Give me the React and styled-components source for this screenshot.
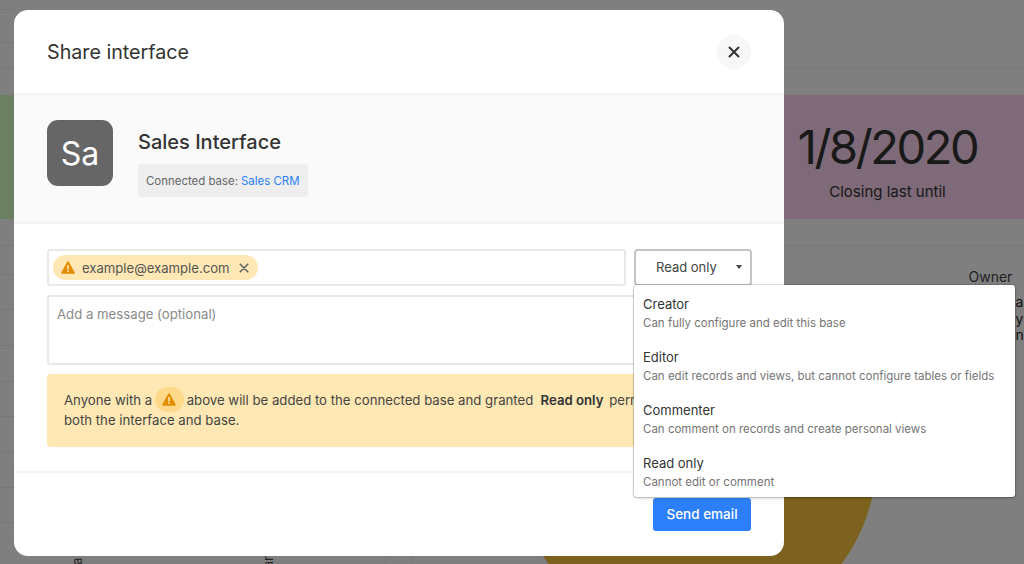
import React from 'react'
import styled, { createGlobalStyle } from 'styled-components'

const GlobalStyle = createGlobalStyle`
  html, body {
    margin: 0;
    padding: 0;
    background: #fff;
    font-family: Inter, "Liberation Sans", sans-serif;
  }
  * {
    box-sizing: border-box;
  }
`

const Page = styled.div`
  position: relative;
  width: 1024px;
  height: 564px;
  overflow: hidden;
  background: #fff;
  color: #333;
`

/* the dashboard behind the dialog */
const TopBar = styled.div`
  height: 95px;
`
const TopLine = styled.div`
  height: ${(p) => p.$h}px;
  width: ${(p) => (p.$short ? '14px' : '100%')};
  border-bottom: 1px solid #eee;
`
const Banners = styled.div`
  display: flex;
  height: 124px;
`
const Banner = styled.div`
  width: ${(p) => p.$w}px;
  background: ${(p) => p.$bg};
  display: flex;
  flex-direction: column;
  align-items: center;
`
const BigNumber = styled.div`
  margin-top: 23px;
  font-size: 47px;
  line-height: 58px;
  letter-spacing: -2.4px;
  color: #333;
`
const BannerLabel = styled.div`
  margin-top: 7px;
  font-size: 15px;
  line-height: 18px;
  color: #333;
`
const Spacer = styled.div`
  height: 27px;
  border-bottom: 1px solid #eee;
`
const Lower = styled.div`
  display: flex;
  height: 318px;
`
const TablePanel = styled.div`
  width: 385.5px;
  border-right: 1px solid #eee;
`
const TableRow = styled.div`
  height: ${(p) => p.$h}px;
  border-bottom: 1px solid #eee;
`
const AxisLabels = styled.div`
  display: flex;
  padding: 33px 0 0 70px;
  gap: 177px;
`
const AxisLabel = styled.div`
  writing-mode: vertical-rl;
  transform: rotate(180deg);
  font-size: 13px;
  line-height: 14px;
  color: #444;
`
const ChartPanel = styled.div`
  display: flex;
  flex: 1;
  margin-left: 26px;
  border-left: 1px solid #eee;
  padding: 28px 0 0 100px;
  min-width: 0;
`
const Pie = styled.div`
  flex-shrink: 0;
  width: 364px;
  height: 364px;
  border-radius: 50%;
  background: #fac23c;
`
const Legend = styled.div`
  margin-left: 92px;
  margin-top: -6px;
  font-size: 14px;
  white-space: nowrap;
`
const LegendTitle = styled.div`
  line-height: 17px;
  color: #444;
`
const LegendItems = styled.div`
  margin-top: 9px;
  padding-left: 47px;
  line-height: 16.5px;
  color: #222;
`
const Dim = styled.div`
  position: absolute;
  inset: 0;
  background: rgba(0, 0, 0, 0.5);
`

/* dialog */
const Modal = styled.div`
  position: absolute;
  left: 13.5px;
  top: 10px;
  width: 770.5px;
  height: 546px;
  background: #fff;
  border-radius: 14px;
  display: flex;
  flex-direction: column;
`
const Header = styled.div`
  height: 85px;
  flex-shrink: 0;
  display: flex;
  align-items: center;
  justify-content: space-between;
  padding: 0 33px 0 33.5px;
  border-bottom: 2px solid #f3f3f3;
`
const Title = styled.h1`
  margin: 0;
  font-size: 19.7px;
  font-weight: 400;
  color: #333;
`
const CloseButton = styled.button`
  width: 34px;
  height: 34px;
  border: none;
  border-radius: 50%;
  background: #f7f7f7;
  padding: 0;
  display: flex;
  align-items: center;
  justify-content: center;
`
const InfoBand = styled.div`
  height: 129px;
  flex-shrink: 0;
  display: flex;
  gap: 25px;
  padding: 25px 33.5px 0;
  background: #fafafa;
  border-bottom: 2px solid #f3f3f3;
`
const Avatar = styled.div`
  width: 66px;
  height: 66px;
  border-radius: 11px;
  background: #666;
  color: #fff;
  font-size: 32px;
  display: flex;
  align-items: center;
  justify-content: center;
`
const InfoText = styled.div`
  display: flex;
  flex-direction: column;
  align-items: flex-start;
`
const InfoName = styled.div`
  margin-top: 9px;
  font-size: 20px;
  line-height: 27px;
  font-weight: 500;
  color: #333;
`
const BaseChip = styled.div`
  margin-top: 8px;
  height: 33px;
  padding: 0 8px;
  display: flex;
  align-items: center;
  gap: 3px;
  background: #eee;
  border-radius: 3px;
  font-size: 11.45px;
  color: #666;
`
const BaseLink = styled.span`
  color: #2d7ff9;
`
const Form = styled.div`
  flex: 1;
  padding: 25px 32px 0 33.5px;
  display: flex;
  flex-direction: column;
  border-bottom: 2px solid #f3f3f3;
`
const RecipientRow = styled.div`
  display: flex;
  gap: 8px;
`
const RecipientInput = styled.div`
  flex: 1;
  height: 37px;
  border: 2px solid #e8e8e8;
  border-radius: 3px;
  padding: 4px;
  display: flex;
  align-items: center;
`
const Pill = styled.div`
  height: 25px;
  width: 205px;
  border-radius: 13px;
  background: #ffe8b3;
  padding: 0 9px 0 8px;
  display: flex;
  align-items: center;
  font-size: 13.1px;
  color: #555;
`
const PillEmail = styled.span`
  margin-left: 7px;
  flex: 1;
`
const SelectWrap = styled.div`
  position: relative;
  width: 118px;
`
const SelectBox = styled.div`
  height: 37px;
  border: 2px solid #c4c4c4;
  border-radius: 4px;
  display: flex;
  align-items: center;
  padding: 0 8px 2px 20px;
  justify-content: space-between;
  font-size: 13px;
  color: #444;
`
const Caret = styled.span`
  width: 0;
  height: 0;
  border-left: 3.5px solid transparent;
  border-right: 3.5px solid transparent;
  border-top: 4.5px solid #444;
`
const Popover = styled.div`
  position: absolute;
  top: 36px;
  left: 0;
  width: 381px;
  height: 212px;
  background: #fff;
  border-radius: 3px;
  box-shadow: 0 0 0 1px rgba(0, 0, 0, 0.1), 0 1px 3px rgba(0, 0, 0, 0.25);
  padding: 9px 9px 0;
  z-index: 2;
`
const Option = styled.div`
  height: 53px;
`
const OptionName = styled.div`
  font-size: 13px;
  line-height: 20px;
  color: #333;
`
const OptionHint = styled.div`
  font-size: 11.5px;
  line-height: 18px;
  color: #757575;
  white-space: nowrap;
`
const MessageBox = styled.div`
  margin-top: 9px;
  height: 70px;
  border: 2px solid #e8e8e8;
  border-radius: 3px;
  padding: 9px 8px;
  font-size: 13.2px;
  line-height: 16px;
  color: #8a8a8a;
`
const WarningBox = styled.div`
  margin-top: 9px;
  height: 73px;
  border-radius: 3px;
  background: #ffe8b3;
  padding: 16px 40px 0 17px;
  font-size: 13.2px;
  line-height: 20px;
  color: #444;
`
const InlineBadge = styled.span`
  display: inline-flex;
  vertical-align: middle;
  align-items: center;
  justify-content: center;
  width: 29px;
  height: 25px;
  margin: -6px 3px -3px 2.5px;
  border-radius: 12.5px;
  background: #ffd98a;
`
const Strong = styled.strong`
  font-weight: 600;
  margin: 0 2px 0 3.5px;
  color: #333;
`
const Footer = styled.div`
  height: 83px;
  flex-shrink: 0;
  display: flex;
  justify-content: flex-end;
  padding: 25px 33px 0 0;
`
const SendButton = styled.button`
  width: 98px;
  height: 33px;
  border: none;
  border-radius: 3px;
  background: #2d7ff9;
  color: #fff;
  padding: 0 0 2px;
  font-family: inherit;
  font-size: 13.5px;
  font-weight: 500;
`

const WarnIcon = () => (
  <svg width="14" height="13" viewBox="0 0 14 13">
    <path
      d="M7 1 L13 12 L1 12 Z"
      fill="#e08d00"
      stroke="#e08d00"
      strokeWidth="1.6"
      strokeLinejoin="round"
    />
    <rect x="6.2" y="4" width="1.6" height="4.4" fill="#ffe8b3" />
    <rect x="6.2" y="9.3" width="1.6" height="1.6" fill="#ffe8b3" />
  </svg>
)

const CloseIcon = ({ size, color, width }) => (
  <svg width={size} height={size} viewBox="0 0 12 12">
    <path
      d="M1.5 1.5 L10.5 10.5 M10.5 1.5 L1.5 10.5"
      stroke={color}
      strokeWidth={width}
      strokeLinecap="round"
    />
  </svg>
)

const roles = [
  { name: 'Creator', hint: 'Can fully configure and edit this base' },
  { name: 'Editor', hint: 'Can edit records and views, but cannot configure tables or fields' },
  { name: 'Commenter', hint: 'Can comment on records and create personal views' },
  { name: 'Read only', hint: 'Cannot edit or comment' },
]

const rowHeights = [29, 35, 36, 36, 35, 36, 35, 35]

const App = () => {
  return (
    <Page>
      <GlobalStyle />
      <TopBar>
        <TopLine $short $h={10} />
        <TopLine $short $h={33} />
        <TopLine $h={26} />
      </TopBar>
      <Banners>
        <Banner $w={272} $bg="#d6ffc4" />
        <Banner $w={479} $bg="#fff" />
        <Banner $w={273} $bg="#fcd4f0">
          <BigNumber>1/8/2020</BigNumber>
          <BannerLabel>Closing last until</BannerLabel>
        </Banner>
      </Banners>
      <Spacer />
      <Lower>
        <TablePanel>
          {rowHeights.map((h, i) => (
            <TableRow key={i} $h={h} />
          ))}
          <AxisLabels>
            <AxisLabel>ia</AxisLabel>
            <AxisLabel>ar</AxisLabel>
          </AxisLabels>
        </TablePanel>
        <ChartPanel>
          <Pie />
          <Legend>
            <LegendTitle>Owner</LegendTitle>
            <LegendItems>
              <div>an</div>
              <div>y</div>
              <div>n C</div>
            </LegendItems>
          </Legend>
        </ChartPanel>
      </Lower>
      <Dim />
      <Modal>
        <Header>
          <Title>Share interface</Title>
          <CloseButton>
            <CloseIcon size={12} color="#333" width={2} />
          </CloseButton>
        </Header>
        <InfoBand>
          <Avatar>Sa</Avatar>
          <InfoText>
            <InfoName>Sales Interface</InfoName>
            <BaseChip>
              Connected base: <BaseLink>Sales CRM</BaseLink>
            </BaseChip>
          </InfoText>
        </InfoBand>
        <Form>
          <RecipientRow>
            <RecipientInput>
              <Pill>
                <WarnIcon />
                <PillEmail>example@example.com</PillEmail>
                <CloseIcon size={10} color="#666" width={2} />
              </Pill>
            </RecipientInput>
            <SelectWrap>
              <SelectBox>
                Read only
                <Caret />
              </SelectBox>
              <Popover>
                {roles.map((role) => (
                  <Option key={role.name}>
                    <OptionName>{role.name}</OptionName>
                    <OptionHint>{role.hint}</OptionHint>
                  </Option>
                ))}
              </Popover>
            </SelectWrap>
          </RecipientRow>
          <MessageBox>Add a message (optional)</MessageBox>
          <WarningBox>
            Anyone with a
            <InlineBadge>
              <WarnIcon />
            </InlineBadge>
            above will be added to the connected base and granted <Strong>Read only</Strong> permissions to both the interface and base.
          </WarningBox>
        </Form>
        <Footer>
          <SendButton>Send email</SendButton>
        </Footer>
      </Modal>
    </Page>
  )
}

export default App
